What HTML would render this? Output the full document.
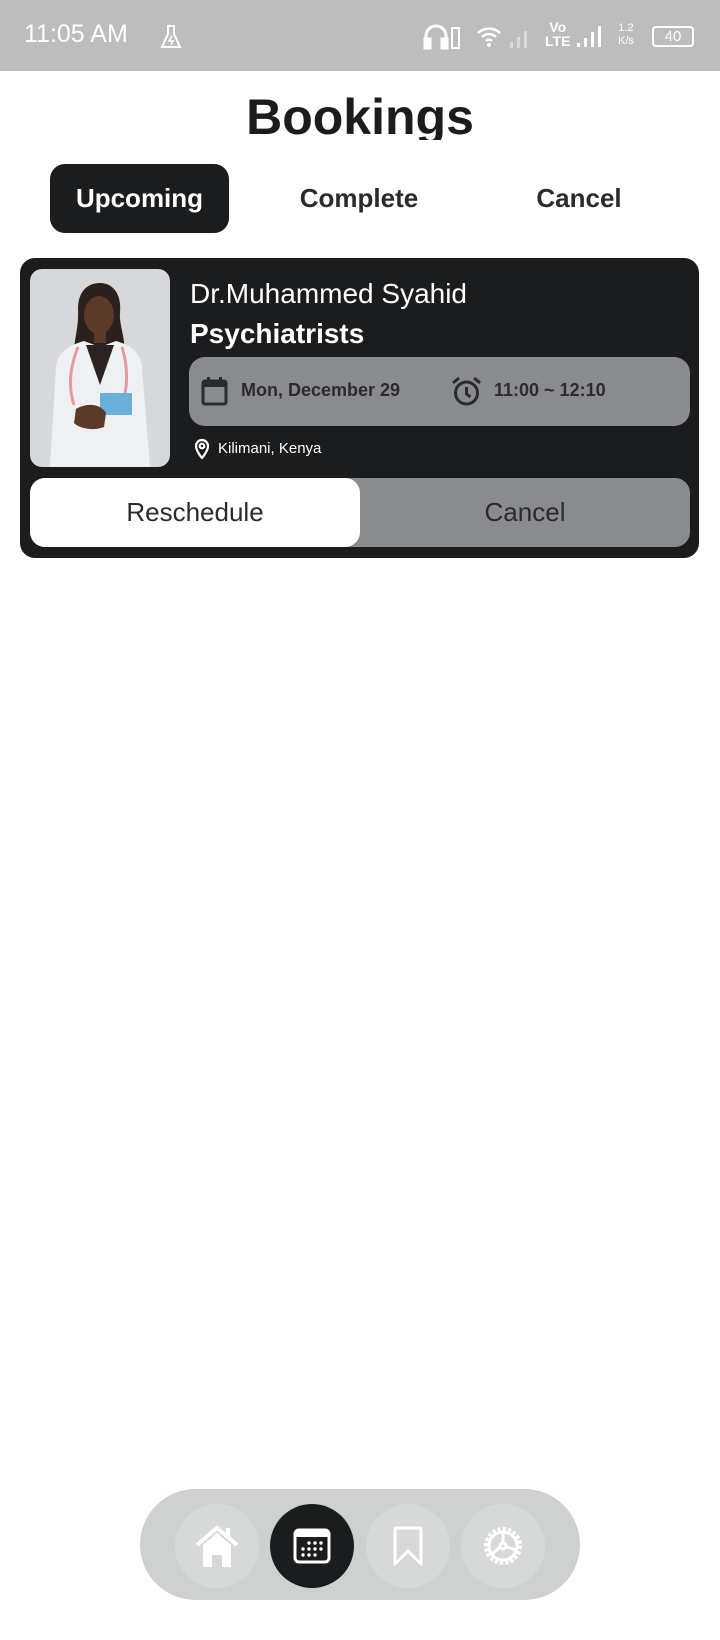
<!DOCTYPE html>
<html><head><meta charset="utf-8"><style>
*{margin:0;padding:0;box-sizing:border-box}
body{width:720px;height:1640px;background:#fff;font-family:"Liberation Sans",sans-serif;position:relative;overflow:hidden}
.abs{position:absolute}
.sb{left:0;top:0;width:720px;height:71px;background:#bdbdbd;color:#fff}
.tab{top:164px;height:69px;font-size:26px;font-weight:700;color:#2a2b2d;display:flex;align-items:center;justify-content:center}
.card{left:20px;top:258px;width:679px;height:300px;background:#1b1c1e;border-radius:15px}
.circ{width:84px;height:84px;border-radius:50%;background:#d7d9d9;top:1504px;display:flex;align-items:center;justify-content:center}
</style></head><body>
<div class="abs sb">
  <div class="abs" style="left:24px;top:20px;font-size:25px">11:05 AM</div>
  <svg class="abs" style="left:160px;top:24px" width="22" height="26" viewBox="0 0 22 26" fill="none" stroke="#fff" stroke-width="2"><path d="M7 2h8M8 2v8l-6 13h18l-6-13V2"/><path d="M12 12l-3 5h4l-2 4" stroke-width="1.5"/></svg>
  <svg class="abs" style="left:423px;top:22px" width="40" height="28" viewBox="0 0 40 28" fill="none" stroke="#fff" stroke-width="3"><path d="M3 24V14a10 10 0 0 1 20 0v10"/><rect x="2" y="17" width="5" height="9" fill="#fff"/><rect x="19" y="17" width="5" height="9" fill="#fff"/><rect x="29" y="6" width="7" height="20" stroke-width="2"/></svg>
  <svg class="abs" style="left:476px;top:24px" width="60" height="26" viewBox="0 0 60 26"><path d="M2 9a16 16 0 0 1 22 0M6 13a10 10 0 0 1 14 0M10 17a4 4 0 0 1 6 0" stroke="#fff" stroke-width="2.5" fill="none"/><circle cx="13" cy="21" r="2" fill="#fff"/><g fill="#d9d9d9"><rect x="34" y="18" width="3" height="6"/><rect x="41" y="13" width="3" height="11"/><rect x="48" y="7" width="3" height="17"/></g></svg>
  <div class="abs" style="left:545px;top:20px;font-size:14px;font-weight:700;line-height:14px;text-align:center">Vo<br>LTE</div>
  <svg class="abs" style="left:575px;top:26px" width="30" height="22" viewBox="0 0 30 22" fill="#fff"><rect x="2" y="17" width="3" height="4"/><rect x="9" y="12" width="3" height="9"/><rect x="16" y="6" width="3" height="15"/><rect x="23" y="0" width="3" height="21"/></svg>
  <div class="abs" style="left:618px;top:22px;font-size:11px;line-height:13px;text-align:center">1.2<br>K/s</div>
  <div class="abs" style="left:652px;top:26px;width:42px;height:21px;border:2px solid #fff;border-radius:4px;font-size:15px;text-align:center;line-height:17px">40</div>
</div>
<div class="abs" style="left:0;width:720px;top:86px;height:54px;overflow:hidden;text-align:center;font-size:50px;font-weight:700;color:#1b1c1e;line-height:62px">Bookings</div>
<div class="abs tab" style="left:50px;width:179px;background:#1b1c1e;color:#fff;border-radius:15px">Upcoming</div>
<div class="abs tab" style="left:269px;width:180px">Complete</div>
<div class="abs tab" style="left:489px;width:180px">Cancel</div>
<div class="abs card"></div>
<svg class="abs" style="left:30px;top:269px;border-radius:12px" width="140" height="198" viewBox="0 0 140 198">
  <rect width="140" height="198" fill="#d7d8da"/>
  <path d="M48 40c0-18 10-26 22-26s22 10 20 30c-1 12 6 26 4 40l-8-4-34 0-8 4c0-14 5-26 4-44z" fill="#2a211c"/>
  <ellipse cx="69" cy="46" rx="15" ry="19" fill="#5a3a28"/>
  <path d="M64 62h12v12H64z" fill="#5a3a28"/>
  <path d="M20 198l6-100c2-16 14-22 28-26l16 6 16-6c14 4 24 10 26 26l8 100z" fill="#eef0f2"/>
  <path d="M56 76l14 40 14-40z" fill="#2b2423"/>
  <path d="M48 78c-8 20-10 40-4 58M92 78c6 20 6 40 0 58" stroke="#e39aa2" stroke-width="3" fill="none"/>
  <rect x="70" y="124" width="32" height="22" fill="#6ab0d8"/>
  <path d="M46 140c10-6 24-6 30 4l-2 14c-10 4-24 2-30-4z" fill="#5a3a28"/>
</svg>
<div class="abs" style="left:190px;top:278px;font-size:28px;color:#fff;font-weight:300">Dr.Muhammed Syahid</div>
<div class="abs" style="left:190px;top:318px;font-size:28px;color:#fff;font-weight:700">Psychiatrists</div>
<div class="abs" style="left:189px;top:357px;width:501px;height:69px;background:#8a8b8d;border-radius:16px"></div>
<svg class="abs" style="left:201px;top:377px" width="27" height="29" viewBox="0 0 27 29"><rect x="2" y="4" width="23" height="23" rx="2" fill="none" stroke="#2a2b2d" stroke-width="3"/><rect x="2" y="4" width="23" height="6" fill="#2a2b2d"/><rect x="6" y="0" width="3" height="6" fill="#2a2b2d"/><rect x="18" y="0" width="3" height="6" fill="#2a2b2d"/></svg>
<div class="abs" style="left:241px;top:380px;font-size:18px;font-weight:700;color:#2a2b2d">Mon, December 29</div>
<svg class="abs" style="left:451px;top:376px" width="31" height="31" viewBox="0 0 31 31" fill="none" stroke="#2a2b2d" stroke-width="3"><circle cx="15.5" cy="17" r="11"/><path d="M15.5 11v7l4 3M2 7l6-5M29 7l-6-5"/></svg>
<div class="abs" style="left:494px;top:380px;font-size:18px;font-weight:700;color:#2a2b2d">11:00 ~ 12:10</div>
<svg class="abs" style="left:194px;top:438px" width="16" height="21" viewBox="0 0 16 21" fill="none" stroke="#fff" stroke-width="2.2"><path d="M8 20s-6-7-6-12a6 6 0 0 1 12 0c0 5-6 12-6 12z"/><circle cx="8" cy="8" r="2.3"/></svg>
<div class="abs" style="left:218px;top:440px;font-size:15px;color:#fff">Kilimani, Kenya</div>
<div class="abs" style="left:30px;top:478px;width:660px;height:69px;background:#8a8b8d;border-radius:15px"></div>
<div class="abs" style="left:30px;top:478px;width:330px;height:69px;background:#fff;border-radius:15px;display:flex;align-items:center;justify-content:center;font-size:26px;color:#2a2b2d">Reschedule</div>
<div class="abs" style="left:360px;top:478px;width:330px;height:69px;display:flex;align-items:center;justify-content:center;font-size:26px;color:#2a2b2d">Cancel</div>
<div class="abs" style="left:140px;top:1489px;width:440px;height:111px;background:#cfd1d1;border-radius:56px"></div>
<div class="abs circ" style="left:175px"><svg width="46" height="42" viewBox="0 0 46 42"><path d="M3 20L23 3l20 17" stroke="#fff" stroke-width="4" fill="none"/><path d="M9 20L23 8l14 12v22H28V30h-10v12H9z" fill="#fff"/><rect x="32" y="3" width="4" height="10" fill="#fff"/></svg></div>
<div class="abs circ" style="left:270px;background:#1b1c1e"><svg width="38" height="36" viewBox="0 0 38 36"><rect x="2" y="2" width="34" height="32" rx="4" fill="none" stroke="#fff" stroke-width="3"/><rect x="2" y="2" width="34" height="7" fill="#fff"/><g fill="#fff"><circle cx="16" cy="15" r="1.7"/><circle cx="22" cy="15" r="1.7"/><circle cx="28" cy="15" r="1.7"/><circle cx="10" cy="21" r="1.7"/><circle cx="16" cy="21" r="1.7"/><circle cx="22" cy="21" r="1.7"/><circle cx="28" cy="21" r="1.7"/><circle cx="10" cy="27" r="1.7"/><circle cx="16" cy="27" r="1.7"/><circle cx="22" cy="27" r="1.7"/></g></svg></div>
<div class="abs circ" style="left:366px"><svg width="32" height="42" viewBox="0 0 32 42"><path d="M3 3h26v36L16 26 3 39z" fill="none" stroke="#fff" stroke-width="3" stroke-linejoin="round"/></svg></div>
<div class="abs circ" style="left:461px"><svg width="44" height="44" viewBox="0 0 44 44" fill="none" stroke="#fff" stroke-width="3"><circle cx="22" cy="22" r="16" stroke-dasharray="3 2" stroke-width="6"/><circle cx="22" cy="22" r="14"/><circle cx="22" cy="22" r="3"/><path d="M22 19V8M25 23l11 3M19 23l-9 8"/></svg></div>
</body></html>
